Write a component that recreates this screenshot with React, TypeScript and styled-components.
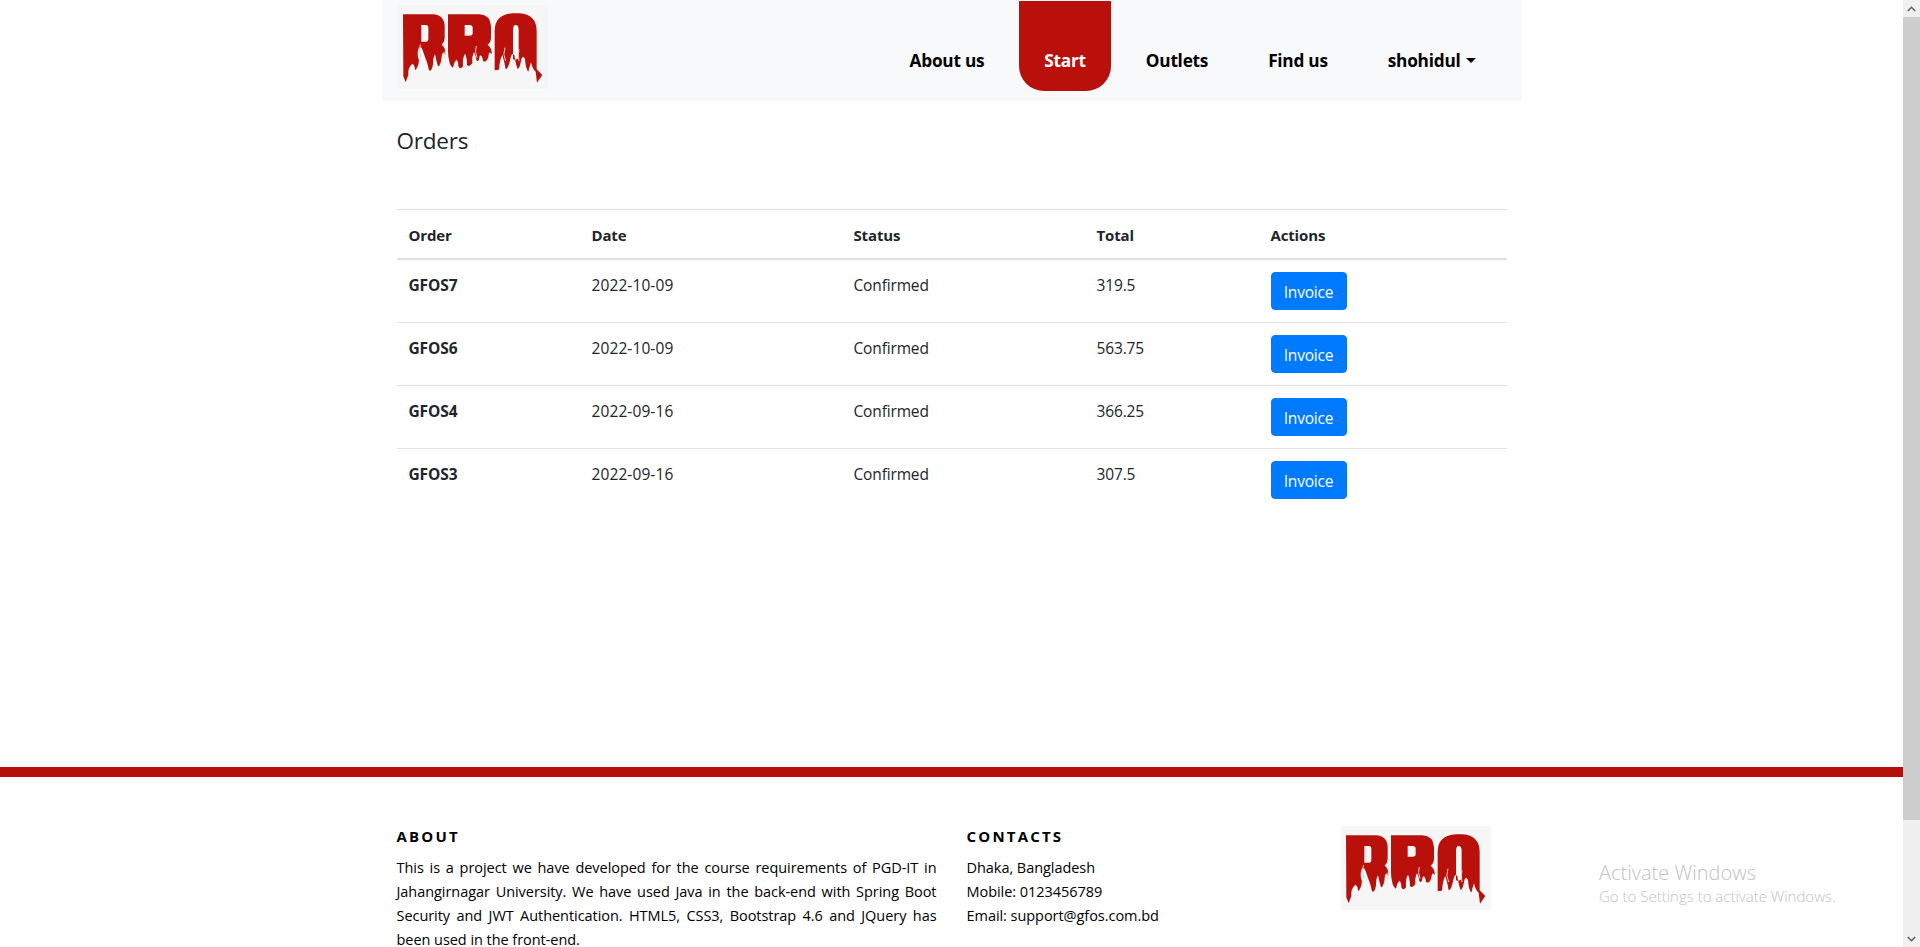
import React from 'react';
import styled, { createGlobalStyle } from 'styled-components';

const GlobalStyle = createGlobalStyle`
  html, body {
    margin: 0;
    height: 100%;
    overflow: hidden;
    background: #fff;
  }
  body {
    font-family: "Open Sans", "Noto Sans", sans-serif;
    font-size: 16px;
    line-height: 24px;
    color: #212529;
  }
`;

const Shell = styled.div`
  display: flex;
  height: 947px;
`;

const Page = styled.div`
  position: relative;
  flex: 1;
  min-width: 0;
  overflow: hidden;
`;

const Container = styled.div`
  width: 1140px;
  margin: 0 auto;
`;

const Navbar = styled.nav`
  display: flex;
  align-items: flex-start;
  height: 101px;
  padding-left: 16px;
  padding-right: 21px;
  box-sizing: border-box;
  background: #f8f9fa;
`;

const NavLinks = styled.div`
  display: flex;
  gap: 10px;
  margin-left: auto;
  padding-top: 1px;
`;

const NavLink = styled.a<{ $active?: boolean }>`
  display: block;
  height: 90px;
  box-sizing: border-box;
  padding: 46px 25px 0;
  font-size: 17.25px;
  line-height: 27px;
  font-weight: 700;
  letter-spacing: -0.25px;
  color: ${(p) => (p.$active ? '#fff' : '#000')};
  background: ${(p) => (p.$active ? '#b9100b' : 'transparent')};
  border-radius: 0 0 25px 25px;
`;

const Caret = styled.span`
  display: inline-block;
  margin-left: 5px;
  vertical-align: 4px;
  border-top: 5px solid #000;
  border-left: 5px solid transparent;
  border-right: 5px solid transparent;
`;

const Content = styled.main`
  height: 666px;
  box-sizing: border-box;
  padding: 23px 15px 0;
`;

const Heading = styled.h4`
  margin: 0 0 51px;
  font-size: 22.5px;
  line-height: 34px;
  font-weight: 400;
  letter-spacing: -0.2px;
`;

const OrdersTable = styled.table`
  width: 100%;
  table-layout: fixed;
  border-collapse: collapse;
`;

const Th = styled.th<{ $width?: number }>`
  box-sizing: border-box;
  width: ${(p) => (p.$width ? `${p.$width}px` : 'auto')};
  padding: 13px 12px 11px;
  text-align: left;
  font-weight: 700;
  font-size: 15px;
  letter-spacing: -0.15px;
  border-top: 1px solid #dee2e6;
  border-bottom: 2px solid #dee2e6;
`;

const Td = styled.td<{ $strong?: boolean }>`
  padding: 13px 12px 11px;
  vertical-align: top;
  font-weight: ${(p) => (p.$strong ? 700 : 400)};
  font-size: 15.5px;
  letter-spacing: ${(p) => (p.$strong ? '-0.1px' : '-0.15px')};
  border-top: 1px solid #dee2e6;
`;

const DateTd = styled(Td)`
  letter-spacing: 0.1px;
`;

const ActionTd = styled(Td)`
  padding: 12px;
`;

const InvoiceButton = styled.button`
  display: block;
  width: 76px;
  height: 38px;
  padding: 1px 0 0;
  border: 1px solid #007bff;
  border-radius: 4px;
  background: #007bff;
  color: #fff;
  font-family: inherit;
  font-size: 15.5px;
  letter-spacing: -0.2px;
  line-height: 24px;
`;

const RedBar = styled.div`
  height: 10px;
  background: #b5100a;
`;

const FooterGrid = styled.div`
  display: grid;
  grid-template-columns: 570px 285px 285px;
  padding-top: 49px;
  color: #000;
`;

const FooterColumn = styled.div`
  padding: 0 15px;
`;

const FooterLogoColumn = styled.div`
  padding-left: 104px;
`;

const FooterTitle = styled.h5`
  margin: 0 0 9px;
  font-size: 15px;
  line-height: 21px;
  font-weight: 700;
  letter-spacing: 2.2px;
`;

const FooterText = styled.p`
  margin: 0;
  font-size: 14.5px;
  line-height: 24px;
  letter-spacing: -0.05px;
  text-align: justify;
`;

const ContactLine = styled.div`
  font-size: 14.5px;
  line-height: 24px;
  letter-spacing: -0.05px;
`;

const Watermark = styled.div`
  position: absolute;
  left: 1599px;
  top: 859px;
  color: #c2c2c2;
  white-space: nowrap;
`;

const WatermarkTitle = styled.div`
  font-size: 20px;
  line-height: 28px;
  font-weight: 300;
`;

const WatermarkHint = styled.div`
  font-size: 15px;
  line-height: 18px;
  font-weight: 300;
`;

const Scrollbar = styled.aside`
  display: flex;
  flex-direction: column;
  width: 17px;
  background: #f0f0f0;
`;

const ScrollArrow = styled.div`
  display: flex;
  align-items: center;
  justify-content: center;
  height: 17px;
  flex: none;
`;

const ScrollThumb = styled.div`
  height: 803px;
  flex: none;
  background: #cdcdcd;
`;

const ScrollRest = styled.div`
  flex: 1;
`;

const LogoBox = styled.svg`
  display: block;
  flex: none;
`;

const NavLogoSlot = styled.div`
  margin-top: 5px;
`;

// flame logo, traced by hand from the reference
const LETTER_R1 =
  'M70 40 L160 40 Q194 42 195 76 L195 112 Q194 125 186 131 Q198 138 197 162 Q192 150 187 160 Q184 196 175 196 Q170 180 166 160 Q160 168 160 190 Q156 214 148 208 Q144 186 136 168 Q130 150 126 140 L118 138 Q110 160 118 178 Q116 200 106 208 Q106 192 98 188 Q84 200 86 222 L78 244 L71 226 Z M125 72 L125 122 L140 122 Q146 122 146 112 L146 80 Q146 72 138 72 Z';
const LETTER_R2 =
  'M205 40 L300 40 Q332 42 334 76 L334 112 Q333 125 324 131 Q336 140 337 160 Q328 146 326 168 Q320 186 310 180 Q308 160 300 164 Q298 186 290 178 Q288 160 282 154 Q276 170 278 186 Q270 200 262 192 Q262 170 256 158 Q248 170 250 196 Q242 208 236 196 Q236 180 230 176 Q222 184 220 200 Q210 194 208 176 Q205 165 205 150 Z M255 72 L255 104 L270 104 Q279 104 279 96 L279 80 Q279 72 270 72 Z';
const LETTER_Q =
  'M345 90 Q345 40 400 37 L420 37 Q470 40 471 90 L471 205 L488 222 L472 245 L468 212 Q458 204 454 184 Q450 196 446 212 Q438 204 436 174 Q428 160 424 180 Q420 202 414 204 Q408 190 404 162 Q396 152 392 174 Q386 204 378 205 Q374 180 368 162 Q360 176 358 206 L345 208 Z M400 88 L400 175 Q408 178 417 172 L417 88 Q417 72 408 72 Q400 72 400 88 Z';

const Logo = () => (
  <LogoBox width="150" height="84" viewBox="55 12 450 252">
    <rect x="55" y="12" width="450" height="252" fill="#f6f6f6" />
    <path d={LETTER_R1} fill="#b9100b" fillRule="evenodd" />
    <path d={LETTER_R2} fill="#b9100b" fillRule="evenodd" />
    <path d={LETTER_Q} fill="#b9100b" fillRule="evenodd" />
    <g fill="none" stroke="#f3c9c6" strokeWidth="3">
      <path d="M122 130 Q116 150 124 168" />
      <path d="M194 152 Q190 165 196 172" />
      <path d="M290 135 Q284 150 292 170" />
      <path d="M376 140 Q368 160 378 180" />
      <path d="M418 145 Q414 160 418 180" />
    </g>
  </LogoBox>
);

const orders = [
  { id: 'GFOS7', date: '2022-10-09', status: 'Confirmed', total: '319.5' },
  { id: 'GFOS6', date: '2022-10-09', status: 'Confirmed', total: '563.75' },
  { id: 'GFOS4', date: '2022-09-16', status: 'Confirmed', total: '366.25' },
  { id: 'GFOS3', date: '2022-09-16', status: 'Confirmed', total: '307.5' },
];

export default function App() {
  return (
    <>
      <GlobalStyle />
      <Shell>
        <Page>
          <Container>
            <Navbar>
              <NavLogoSlot>
                <Logo />
              </NavLogoSlot>
              <NavLinks>
                <NavLink>About us</NavLink>
                <NavLink $active>Start</NavLink>
                <NavLink>Outlets</NavLink>
                <NavLink>Find us</NavLink>
                <NavLink>
                  shohidul
                  <Caret />
                </NavLink>
              </NavLinks>
            </Navbar>
            <Content>
              <Heading>Orders</Heading>
              <OrdersTable>
                <thead>
                  <tr>
                    <Th $width={183}>Order</Th>
                    <Th $width={262}>Date</Th>
                    <Th $width={243}>Status</Th>
                    <Th $width={174}>Total</Th>
                    <Th>Actions</Th>
                  </tr>
                </thead>
                <tbody>
                  {orders.map((order) => (
                    <tr key={order.id}>
                      <Td $strong>{order.id}</Td>
                      <DateTd>{order.date}</DateTd>
                      <Td>{order.status}</Td>
                      <Td>{order.total}</Td>
                      <ActionTd>
                        <InvoiceButton>Invoice</InvoiceButton>
                      </ActionTd>
                    </tr>
                  ))}
                </tbody>
              </OrdersTable>
            </Content>
          </Container>
          <RedBar />
          <Container>
            <FooterGrid>
              <FooterColumn>
                <FooterTitle>ABOUT</FooterTitle>
                <FooterText>
                  This is a project we have developed for the course requirements of PGD-IT in
                  Jahangirnagar University. We have used Java in the back-end with Spring Boot
                  Security and JWT Authentication. HTML5, CSS3, Bootstrap 4.6 and JQuery has been
                  used in the front-end.
                </FooterText>
              </FooterColumn>
              <FooterColumn>
                <FooterTitle>CONTACTS</FooterTitle>
                <ContactLine>Dhaka, Bangladesh</ContactLine>
                <ContactLine>Mobile: 0123456789</ContactLine>
                <ContactLine>Email: support@gfos.com.bd</ContactLine>
              </FooterColumn>
              <FooterLogoColumn>
                <Logo />
              </FooterLogoColumn>
            </FooterGrid>
          </Container>
          <Watermark>
            <WatermarkTitle>Activate Windows</WatermarkTitle>
            <WatermarkHint>Go to Settings to activate Windows.</WatermarkHint>
          </Watermark>
        </Page>
        <Scrollbar>
          <ScrollArrow>
            <svg width="9" height="6" viewBox="0 0 9 6">
              <path d="M0.8 5 L4.5 1.3 L8.2 5" fill="none" stroke="#606060" strokeWidth="1.6" />
            </svg>
          </ScrollArrow>
          <ScrollThumb />
          <ScrollRest />
          <ScrollArrow>
            <svg width="9" height="6" viewBox="0 0 9 6">
              <path d="M0.8 1 L4.5 4.7 L8.2 1" fill="none" stroke="#606060" strokeWidth="1.6" />
            </svg>
          </ScrollArrow>
        </Scrollbar>
      </Shell>
    </>
  );
}
